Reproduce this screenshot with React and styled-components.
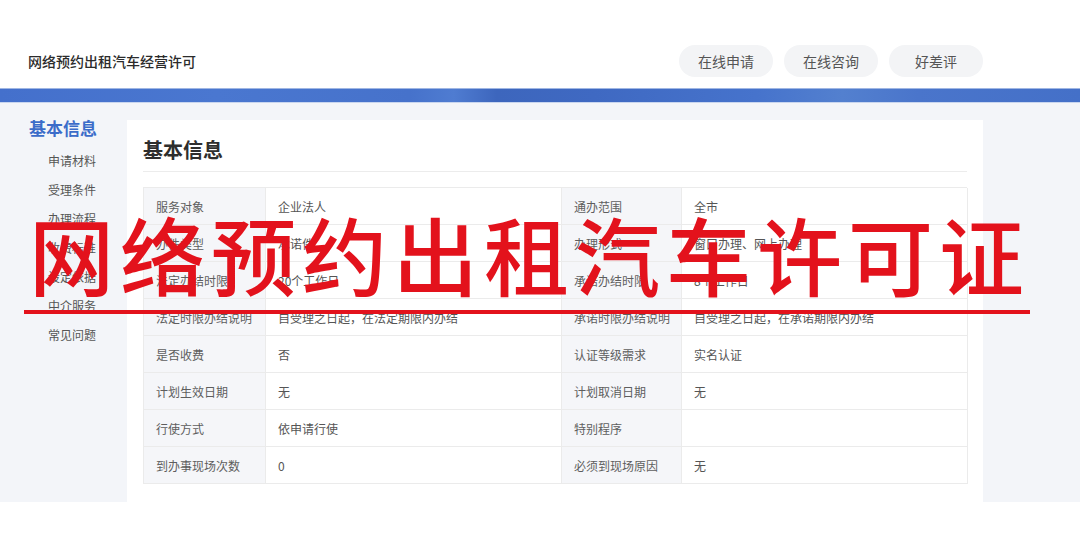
import React from "react";
import styled, { createGlobalStyle } from "styled-components";

const GlobalStyle = createGlobalStyle`
  html, body { margin: 0; padding: 0; background: #ffffff; }
  body { font-family: "Noto Sans CJK SC", "Noto Sans", sans-serif; }
  * { box-sizing: border-box; }
`;

const Page = styled.div`
  position: relative;
  width: 1080px;
  height: 540px;
  overflow: hidden;
  background: #ffffff;
`;

const Header = styled.header`
  height: 88px;
  display: flex;
  align-items: center;
  justify-content: space-between;
  padding: 44px 97px 10px 28px;
  background: #ffffff;
`;

const SiteTitle = styled.h1`
  margin: 0;
  font-size: 14px;
  font-weight: 500;
  color: #2b2b2b;
  letter-spacing: 0;
`;

const Actions = styled.nav`
  display: flex;
  gap: 11px;
`;

const PillButton = styled.button`
  width: 94px;
  height: 32px;
  border: none;
  border-radius: 16px;
  background: #f3f4f6;
  color: #555;
  font-family: inherit;
  font-size: 14px;
  cursor: pointer;
`;

const Banner = styled.div`
  height: 15px;
  background: linear-gradient(
    90deg,
    #4470cc 0%,
    #4a77d0 20%,
    #4672cb 38%,
    #4f7cd1 42%,
    #3d66bd 46%,
    #3f69c2 55%,
    #4673cc 70%,
    #5380cf 78%,
    #4a75cb 85%,
    #4470c8 100%
  );
  border-top: 1px solid #9fb6e3;
  border-bottom: 1px solid #c9d6ef;
`;

const Main = styled.main`
  height: 399px;
  display: flex;
  background: #f3f5f9;
  padding-top: 17px;
  overflow: hidden;
`;

const Sidebar = styled.aside`
  width: 127px;
  flex-shrink: 0;
  margin-top: -4px;
  padding-left: 29px;
  display: flex;
  flex-direction: column;
`;

const SideHeading = styled.div`
  font-size: 17px;
  font-weight: 700;
  color: #3b6cc9;
  line-height: 24px;
  margin-bottom: 6px;
`;

const SideItem = styled.div`
  padding-left: 19px;
  font-size: 12px;
  line-height: 29px;
  color: #555;
`;

const Card = styled.section`
  width: 856px;
  background: #ffffff;
  padding: 16px 16px 0 16px;
`;

const CardTitle = styled.h2`
  margin: 0;
  font-size: 20px;
  font-weight: 700;
  line-height: 28px;
  color: #2e2e2e;
  padding-bottom: 7px;
  border-bottom: 1px solid #ececec;
`;

const Table = styled.div`
  margin-top: 15px;
  display: grid;
  grid-template-columns: 122px 296px 120px 286px;
  border-top: 1px solid #ebebeb;
  border-left: 1px solid #ebebeb;
`;

const Cell = styled.div`
  height: 37px;
  display: flex;
  align-items: center;
  padding-left: 12px;
  font-size: 12px;
  color: ${(p) => (p.$label ? "#5e5e5e" : "#555")};
  background: ${(p) => (p.$label ? "#f5f6f9" : "#ffffff")};
  border-right: 1px solid #ebebeb;
  border-bottom: 1px solid #ebebeb;
  white-space: nowrap;
`;

const Stamp = styled.div`
  position: absolute;
  left: 24px;
  top: 203px;
  display: flex;
  flex-direction: column;
  align-items: flex-start;
  pointer-events: none;
`;

const StampText = styled.div`
  font-family: "Noto Sans CJK SC", sans-serif;
  font-size: 85px;
  font-weight: 500;
  line-height: 100px;
  letter-spacing: 6px;
  color: #e3121c;
  padding-left: 5px;
`;

const StampLine = styled.div`
  width: 1006px;
  height: 4px;
  background: #e3121c;
  margin-top: 7px;
`;

const sideItems = ["申请材料", "受理条件", "办理流程", "收费标准", "设定依据", "中介服务", "常见问题"];

const rows = [
  ["服务对象", "企业法人", "通办范围", "全市"],
  ["办件类型", "承诺件", "办理形式", "窗口办理、网上办理"],
  ["法定办结时限", "20个工作日", "承诺办结时限", "8个工作日"],
  ["法定时限办结说明", "自受理之日起，在法定期限内办结", "承诺时限办结说明", "自受理之日起，在承诺期限内办结"],
  ["是否收费", "否", "认证等级需求", "实名认证"],
  ["计划生效日期", "无", "计划取消日期", "无"],
  ["行使方式", "依申请行使", "特别程序", ""],
  ["到办事现场次数", "0", "必须到现场原因", "无"],
];

export default function App() {
  return (
    <Page>
      <GlobalStyle />
      <Header>
        <SiteTitle>网络预约出租汽车经营许可</SiteTitle>
        <Actions>
          <PillButton>在线申请</PillButton>
          <PillButton>在线咨询</PillButton>
          <PillButton>好差评</PillButton>
        </Actions>
      </Header>
      <Banner />
      <Main>
        <Sidebar>
          <SideHeading>基本信息</SideHeading>
          {sideItems.map((s) => (
            <SideItem key={s}>{s}</SideItem>
          ))}
        </Sidebar>
        <Card>
          <CardTitle>基本信息</CardTitle>
          <Table>
            {rows.map((r, i) =>
              r.map((c, j) => (
                <Cell key={`${i}-${j}`} $label={j % 2 === 0}>
                  {c}
                </Cell>
              ))
            )}
          </Table>
        </Card>
      </Main>
      <Stamp>
        <StampText>网络预约出租汽车许可证</StampText>
        <StampLine />
      </Stamp>
    </Page>
  );
}
